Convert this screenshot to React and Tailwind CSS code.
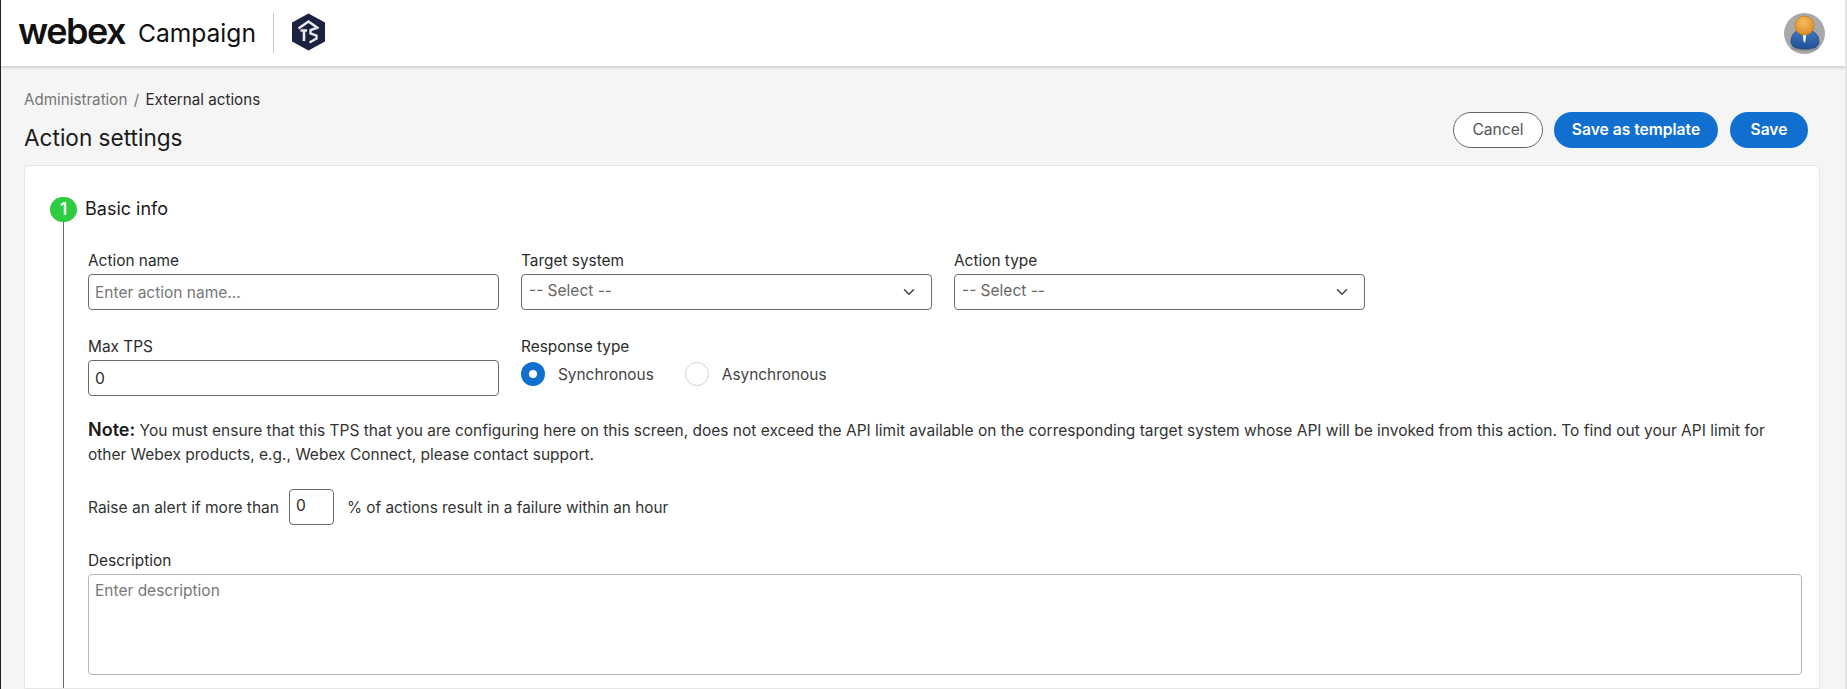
import { ChevronDown } from 'lucide-react'

function Logo() {
  return (
    <svg width="35" height="38" viewBox="0 0 35 38">
      <path d="M17.5 0.5 L34 9.5 V28.5 L17.5 37.5 L1 28.5 V9.5 Z" fill="#1c2140" />
      <path d="M7.5 15.5 L17.5 8.5 L27.5 15.5" fill="none" stroke="#e8e9ee" strokeWidth="2.6" />
      <path d="M9.5 17.5 H16 M13 17.5 V28" fill="none" stroke="#e8e9ee" strokeWidth="2.6" />
      <path d="M25.5 15 L19.5 17 V20.5 L25.5 22.5 V25.5 L18.5 29.5" fill="none" stroke="#e8e9ee" strokeWidth="2.4" />
    </svg>
  )
}

function Avatar() {
  return (
    <svg width="41" height="41" viewBox="0 0 41 41">
      <defs>
        <radialGradient id="head" cx="45%" cy="35%" r="65%">
          <stop offset="0%" stopColor="#f6bd62" />
          <stop offset="100%" stopColor="#dc8c24" />
        </radialGradient>
        <linearGradient id="body" x1="0" y1="0" x2="0" y2="1">
          <stop offset="0%" stopColor="#4279c0" />
          <stop offset="100%" stopColor="#1f4f94" />
        </linearGradient>
      </defs>
      <circle cx="20.5" cy="20.5" r="20.5" fill="#a9a9a9" />
      <ellipse cx="20.5" cy="35" rx="14" ry="3" fill="#8f8f8f" />
      <path d="M7 29 C7 22 11 18 16 17 H25 C30 18 35 22 35 29 C35 34 29 36 21 36 C13 36 7 34 7 29 Z" fill="url(#body)" stroke="#1d4580" strokeWidth="0.8" />
      <path d="M18.5 20 H22.5 L21.5 28 L20.5 30 L19.5 28 Z" fill="#eef2f6" />
      <circle cx="20.5" cy="12.5" r="9.5" fill="url(#head)" stroke="#c9811f" strokeWidth="0.8" />
    </svg>
  )
}

function Field({ label, children }) {
  return (
    <div className="w-[411px]">
      <label className="block h-[20px] pt-px mb-[4px] text-[15.4px] leading-[20px] text-[#2b2b2b]">{label}</label>
      {children}
    </div>
  )
}

function Select() {
  return (
    <div className="flex items-center justify-between h-[36px] pl-[7px] pr-[13px] pb-[3px] border border-[#6b6b6b] rounded-[4px] text-[15.5px] text-[#666666]">
      <span>-- Select --</span>
      <ChevronDown size={18} strokeWidth={2} className="text-[#444444] mt-[3px]" />
    </div>
  )
}

function Radio({ checked, label }) {
  return (
    <div className="flex items-center gap-[13px]">
      {checked ? (
        <span className="flex items-center justify-center w-[24px] h-[24px] rounded-full bg-[#1170cf]">
          <span className="w-[8px] h-[8px] rounded-full bg-white" />
        </span>
      ) : (
        <span className="w-[24px] h-[24px] rounded-full border border-[#d4d4d4] bg-white" />
      )}
      <span className="pt-[2px] text-[15.4px] text-[#444444]">{label}</span>
    </div>
  )
}

export default function App() {
  return (
    <div className="flex flex-col h-screen overflow-hidden bg-[#f5f5f5] border-l border-l-[#222222] border-r-2 border-r-[#e4e4e4] font-['Inter',sans-serif]">
      {/* Top bar */}
      <header className="flex items-center justify-between shrink-0 h-[67px] pl-[17px] pr-[20px] bg-white border-b border-[#d4d4d4] shadow-[0_1px_3px_rgba(0,0,0,0.15)]">
        <div className="flex items-center">
          <span className="text-[36px] leading-none font-semibold tracking-[-1.5px] text-[#111111] mb-[4px]">webex</span>
          <span className="ml-[13px] text-[24.6px] leading-none text-[#111111]">Campaign</span>
          <div className="w-px h-[40px] ml-[17px] bg-[#c9c9c9]" />
          <div className="ml-[17px] mb-[2px]"><Logo /></div>
        </div>
        <Avatar />
      </header>

      <main className="flex flex-col flex-1 min-h-0 pl-[23px] pr-[25px]">
        {/* Page title and actions */}
        <div className="flex items-end justify-between shrink-0 h-[82px] pt-[22px]">
          <div className="-mb-px">
            <div className="text-[15.2px] leading-[20px] text-[#777777]">
              Administration <span className="mx-[2px]">/</span> <span className="text-[#2b2b2b]">External actions</span>
            </div>
            <h1 className="mt-[16px] text-[22.6px] leading-[24px] text-[#1a1a1a]">Action settings</h1>
          </div>
          <div className="flex gap-[11px] mr-[12px] mb-[1px] text-[15.6px]">
            <button className="w-[90px] h-[36px] rounded-full border border-[#666666] bg-white text-[#555555]">Cancel</button>
            <button className="w-[164px] h-[36px] mr-px rounded-full bg-[#1170cf] font-semibold text-white">Save as template</button>
            <button className="w-[78px] h-[36px] rounded-full bg-[#1170cf] font-semibold text-white">Save</button>
          </div>
        </div>

        {/* Form card */}
        <section className="flex flex-1 min-h-0 gap-[8px] mt-[16px] pt-[31px] pl-[25px] pr-[17px] bg-white border border-[#e5e5e5] rounded-t-[4px]">
          <div className="flex flex-col items-center shrink-0 w-[27px]">
            <span className="flex items-center justify-center shrink-0 w-[27px] h-[25px] rounded-full bg-[#2ecc40] text-[17px] font-semibold text-white">1</span>
            <div className="flex-1 w-px bg-[#6b6b6b]" />
          </div>

          <div className="flex-1 min-w-0">
            <h2 className="h-[25px] text-[18px] leading-[23px] text-[#1a1a1a]">Basic info</h2>

            <div className="pl-[3px]">
              <div className="flex gap-[22px] mt-[28px]">
                <Field label="Action name">
                  <input readOnly placeholder="Enter action name..." className="w-full h-[36px] px-[6px] border border-[#6b6b6b] rounded-[4px] text-[15.5px] placeholder:text-[#777777]" />
                </Field>
                <Field label="Target system"><Select /></Field>
                <Field label="Action type"><Select /></Field>
              </div>

              <div className="flex gap-[22px] mt-[26px]">
                <Field label="Max TPS">
                  <input readOnly value="0" className="w-full h-[36px] px-[6px] border border-[#6b6b6b] rounded-[4px] text-[15.6px] text-[#2b2b2b]" />
                </Field>
                <Field label="Response type">
                  <div className="flex gap-[31px] mt-[5px]">
                    <Radio checked label="Synchronous" />
                    <Radio label="Asynchronous" />
                  </div>
                </Field>
              </div>

              <p className="mt-[22px] text-[15.5px] leading-[24px] text-[#333333]">
                <strong className="text-[18px] font-semibold text-[#1a1a1a]">Note:</strong> You must ensure that this TPS that you are configuring here on this screen, does not exceed the API limit available on the corresponding target system whose API will be invoked from this action. To find out your API limit for other Webex products, e.g., Webex Connect, please contact support.
              </p>

              <div className="flex items-center mt-[22px] text-[15.5px] text-[#333333]">
                <span className="pt-[2px]">Raise an alert if more than</span>
                <input readOnly value="0" className="w-[45px] h-[36px] ml-[10px] mr-[13px] px-[6px] pb-[3px] border border-[#6b6b6b] rounded-[4px] text-[15.6px] text-[#2b2b2b]" />
                <span className="pt-[2px] text-[15.3px]">% of actions result in a failure within an hour</span>
              </div>

              <label className="block h-[20px] mt-[26px] mb-[3px] text-[15.4px] leading-[20px] text-[#2b2b2b]">Description</label>
              <textarea readOnly placeholder="Enter description" className="block w-full h-[101px] px-[6px] pt-[4px] border border-[#b5b5b5] rounded-[4px] text-[15.5px] resize-none placeholder:text-[#777777]" />
            </div>
          </div>
        </section>
      </main>
    </div>
  )
}
